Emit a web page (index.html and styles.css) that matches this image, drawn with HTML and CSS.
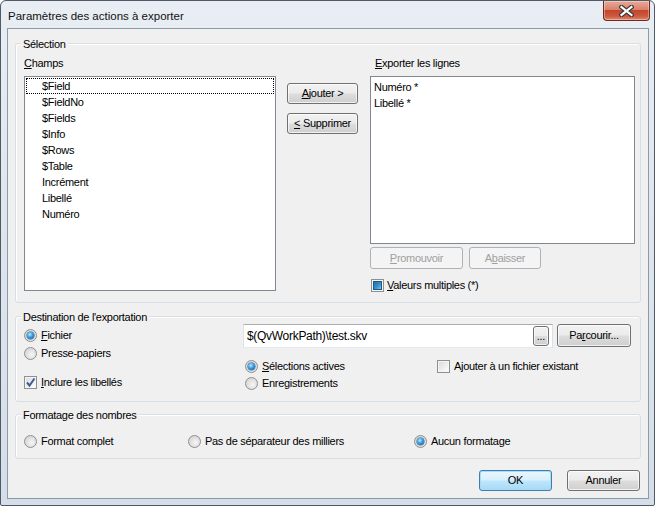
FILE: index.html
```html
<!DOCTYPE html>
<html lang="fr">
<head>
    <meta charset="UTF-8">
    <title>Paramètres des actions à exporter</title>
    <link rel="stylesheet" href="styles.css">
</head>
<body>
    <div class="window">
        <div class="titlebar">
            <span class="title">Paramètres des actions à exporter</span>
            <button class="close-btn" aria-label="Fermer">
                <svg width="15" height="12" viewBox="0 0 15 12">
                    <path d="M2.5 2 L12.5 10 M12.5 2 L2.5 10" stroke="#3b3b3b" stroke-width="4.5" stroke-linecap="square"/>
                    <path d="M2.5 2 L12.5 10 M12.5 2 L2.5 10" stroke="#ffffff" stroke-width="2.2" stroke-linecap="square"/>
                </svg>
            </button>
        </div>

        <div class="client">
            <!-- Sélection -->
            <div class="group group-selection">
                <span class="legend">Sélection</span>

                <div class="col-fields">
                    <div class="label"><u>C</u>hamps</div>
                    <ul class="listbox fields">
                        <li class="focused">$Field</li>
                        <li>$FieldNo</li>
                        <li>$Fields</li>
                        <li>$Info</li>
                        <li>$Rows</li>
                        <li>$Table</li>
                        <li>Incrément</li>
                        <li>Libellé</li>
                        <li>Numéro</li>
                    </ul>
                </div>

                <div class="col-move">
                    <button class="btn"><u>A</u>jouter &gt;</button>
                    <button class="btn"><u>&lt;</u> Supprimer</button>
                </div>

                <div class="col-export">
                    <div class="label label-indent"><u>E</u>xporter les lignes</div>
                    <ul class="listbox export">
                        <li>Numéro *</li>
                        <li>Libellé *</li>
                    </ul>
                    <div class="order-btns">
                        <button class="btn btn-promote" disabled><u>P</u>romouvoir</button>
                        <button class="btn btn-lower" disabled>A<u>b</u>aisser</button>
                    </div>
                    <div class="option multi">
                        <span class="box indeterminate"></span>
                        <span><u>V</u>aleurs multiples (*)</span>
                    </div>
                </div>
            </div>

            <!-- Destination -->
            <div class="group group-dest">
                <span class="legend">Destination de l'exportation</span>

                <div class="dest-left">
                    <div class="option"><span class="radio checked"></span><span><u>F</u>ichier</span></div>
                    <div class="option opt-clip"><span class="radio"></span><span>Presse-papiers</span></div>
                    <div class="option opt-labels">
                        <span class="box">
                            <svg width="11" height="11" viewBox="0 0 11 11"><path d="M2 5.5 L4.5 8.5 L9.5 1.5" fill="none" stroke="#3f5b92" stroke-width="2"/></svg>
                        </span>
                        <span><u>I</u>nclure les libellés</span>
                    </div>
                </div>

                <div class="dest-right">
                    <div class="path-row">
                        <div class="path-field">
                            <span class="path-text">$(QvWorkPath)\test.skv</span>
                            <button class="btn btn-dots">...</button>
                        </div>
                        <button class="btn btn-browse">Pa<u>r</u>courir...</button>
                    </div>
                    <div class="dest-options">
                        <div class="dest-mode">
                            <div class="option"><span class="radio checked"></span><span><u>S</u>élections actives</span></div>
                            <div class="option opt-records"><span class="radio"></span><span>Enregistrements</span></div>
                        </div>
                        <div class="option"><span class="box"></span><span>Ajouter à un fichier existant</span></div>
                    </div>
                </div>
            </div>

            <!-- Formatage -->
            <div class="group group-format">
                <span class="legend">Formatage des nombres</span>
                <div class="format-row">
                    <div class="option fmt-full"><span class="radio"></span><span>Format complet</span></div>
                    <div class="option fmt-nosep"><span class="radio"></span><span>Pas de séparateur des milliers</span></div>
                    <div class="option"><span class="radio checked"></span><span>Aucun formatage</span></div>
                </div>
            </div>

            <div class="footer">
                <button class="btn btn-default">OK</button>
                <button class="btn">Annuler</button>
            </div>
        </div>
    </div>
</body>
</html>
```

FILE: styles.css
```css
:root {
    --face: #f0f0f0;
    --group-border: #d5dfe5;
    --list-border: #828790;
    --btn-border: #707070;
    --disabled-text: #a0a0a0;
    --control-border: #8e8f8f;
}

body {
    margin: 0;
    font-family: "Liberation Sans", Arial, sans-serif;
    font-size: 11px;
    letter-spacing: -0.3px;
    color: #000;
    background: #fff;
}

button {
    font: inherit;
    letter-spacing: inherit;
    color: inherit;
}

.window {
    width: 655px;
    height: 506px;
    box-sizing: border-box;
    border: 1px solid #4f5a66;
    border-radius: 6px 6px 2px 2px;
    background: linear-gradient(to bottom, #e8eef4 0%, #dfe6ee 40%, #d5dee8 100%);
    display: flex;
    flex-direction: column;
}

.titlebar {
    height: 27px;
    display: flex;
    align-items: center;
    justify-content: space-between;
    padding-left: 7px;
}

.title {
    font-size: 11.5px;
    letter-spacing: 0;
    color: #111;
    padding-top: 3px;
}

.close-btn {
    align-self: flex-start;
    width: 47px;
    height: 20px;
    margin-right: 4px;
    padding: 0;
    border: 1px solid #6e2a20;
    border-top: none;
    border-radius: 0 0 4px 4px;
    background: linear-gradient(to bottom, #e9a999 0%, #d9826c 45%, #c4442c 50%, #cc5a40 80%, #e08a6a 100%);
    display: flex;
    align-items: center;
    justify-content: center;
    box-shadow: inset 0 0 0 1px rgba(255, 255, 255, 0.35);
}

.client {
    margin-left: 6px;
    width: 642px;
    height: 471px;
    box-sizing: border-box;
    border: 1px solid #8d9aa8;
    background: var(--face);
    padding: 14px 7px 0 7px;
}

/* group boxes */
.group {
    position: relative;
    box-sizing: border-box;
    border: 1px solid var(--group-border);
    border-radius: 3px;
    box-shadow: inset 1px 1px 0 #fff;
}

.legend {
    position: absolute;
    top: -7px;
    left: 5px;
    padding: 0 2px;
    line-height: 14px;
    background: var(--face);
}

.label {
    line-height: 14px;
    margin-bottom: 6px;
}

.label-indent {
    padding-left: 5px;
}

.group-selection {
    height: 260px;
    display: flex;
    padding: 12px 5px 0 8px;
}

.col-fields {
    width: 252px;
}

.listbox {
    list-style: none;
    margin: 0;
    padding: 1px;
    box-sizing: border-box;
    border: 1px solid var(--list-border);
    background: #fff;
}

.listbox li {
    height: 16px;
    line-height: 16px;
    white-space: nowrap;
}

.fields {
    height: 215px;
}

.fields li {
    padding-left: 16px;
}

.fields li.focused {
    outline: 1px dotted #000;
    outline-offset: -1px;
}

.export {
    height: 168px;
    padding-top: 2px;
}

.export li {
    padding-left: 2px;
}

.col-move {
    width: 71px;
    margin: 0 12px 0 11px;
    padding-top: 27px;
    display: flex;
    flex-direction: column;
    gap: 9px;
}

.col-export {
    width: 265px;
}

/* buttons */
.btn {
    height: 21px;
    padding: 0;
    box-sizing: border-box;
    border: 1px solid var(--btn-border);
    border-radius: 3px;
    background: linear-gradient(to bottom, #f2f2f2 0%, #ebebeb 48%, #dddddd 52%, #cfcfcf 100%);
    box-shadow: inset 0 0 0 1px rgba(255, 255, 255, 0.7);
    line-height: 19px;
    text-align: center;
}

.btn:disabled {
    color: var(--disabled-text);
    border-color: #adb2b5;
    background: #f4f4f4;
    box-shadow: none;
}

.order-btns {
    display: flex;
    gap: 6px;
    margin-top: 3px;
}

.btn-promote {
    width: 93px;
    height: 22px;
}

.btn-lower {
    width: 72px;
    height: 22px;
}

/* radios and checkboxes */
.option {
    display: flex;
    align-items: center;
    gap: 4px;
    height: 16px;
    line-height: 16px;
    white-space: nowrap;
}

.radio {
    position: relative;
    width: 13px;
    height: 13px;
    box-sizing: border-box;
    border-radius: 50%;
    border: 1px solid var(--control-border);
    background: radial-gradient(circle at 60% 60%, #f6f6f6 0%, #dcdcdc 60%, #cfcfcf 100%);
    flex: none;
}

.radio.checked::after {
    content: "";
    position: absolute;
    left: 2px;
    top: 2px;
    width: 7px;
    height: 7px;
    border-radius: 50%;
    background: radial-gradient(circle at 40% 35%, #b9ecff 0%, #3a9be0 45%, #0c4f8c 100%);
    box-shadow: 0 0 0 0.5px #1d5d93;
}

.box {
    position: relative;
    width: 13px;
    height: 13px;
    box-sizing: border-box;
    border: 1px solid var(--control-border);
    background: linear-gradient(135deg, #d8d8d8 0%, #f4f4f4 70%, #ffffff 100%);
    box-shadow: inset 0 0 0 1px #f6f6f6;
    flex: none;
    display: flex;
    align-items: center;
    justify-content: center;
}

.box.indeterminate::after {
    content: "";
    width: 9px;
    height: 9px;
    box-sizing: border-box;
    border: 1px solid #1b5a89;
    background: linear-gradient(135deg, #1f6fa8 0%, #3c96cf 60%, #7cc7ee 100%);
}

.multi {
    margin-top: 8px;
    margin-left: 1px;
    gap: 3px;
}

/* destination */
.group-dest {
    height: 86px;
    margin-top: 13px;
    display: flex;
    padding: 7px 0 0 8px;
}

.dest-left {
    width: 219px;
    padding-top: 3px;
}

.opt-clip {
    margin-top: 2px;
}

.opt-labels {
    margin-top: 13px;
}

.dest-right {
    flex: 1;
}

.path-row {
    display: flex;
    align-items: flex-start;
    gap: 4px;
}

.path-field {
    width: 310px;
    height: 24px;
    box-sizing: border-box;
    border: 1px solid #abadb3;
    border-color: #abadb3 #dbdfe6 #e3e9ef #e2e3ea;
    background: #fff;
    display: flex;
    align-items: center;
    padding-left: 3px;
    padding-right: 3px;
}

.path-text {
    flex: 1;
    font-size: 12px;
}

.btn-dots {
    width: 16px;
    height: 20px;
    line-height: 14px;
}

.btn-browse {
    width: 74px;
    height: 23px;
    line-height: 21px;
}

.dest-options {
    display: flex;
    margin-top: 10px;
    padding-left: 2px;
}

.dest-mode {
    width: 192px;
}

.opt-records {
    margin-top: 1px;
}

/* formatage */
.group-format {
    height: 45px;
    margin-top: 12px;
    padding: 18px 0 0 8px;
}

.format-row {
    display: flex;
}

.fmt-full {
    width: 164px;
}

.fmt-nosep {
    width: 226px;
}

/* footer */
.footer {
    display: flex;
    justify-content: flex-end;
    gap: 15px;
    margin-top: 11px;
    margin-right: 1px;
}

.footer .btn {
    width: 73px;
}

.btn-default {
    border-color: #3c7fb1;
    box-shadow: inset 0 0 0 1px #a8dcf7;
    background: linear-gradient(to bottom, #eaf6fd 0%, #d9f0fc 48%, #bee6fd 52%, #a7d9f5 100%);
}
```
